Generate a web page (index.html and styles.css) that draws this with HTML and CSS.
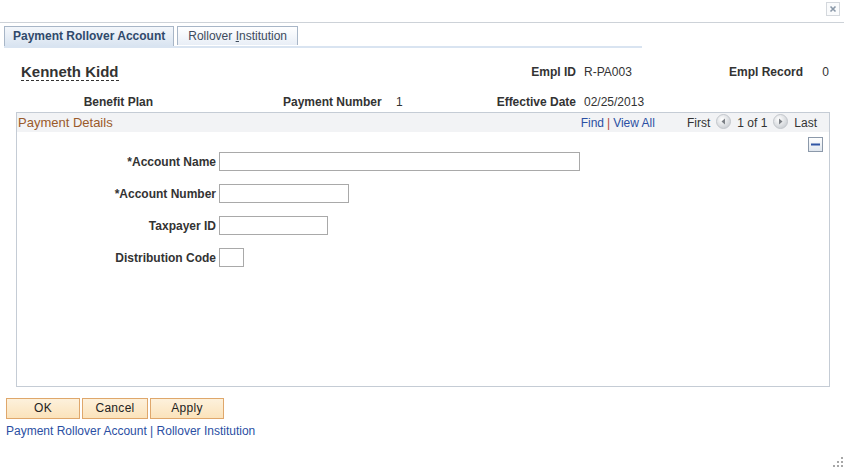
FILE: index.html
```html
<!DOCTYPE html>
<html>
<head>
<meta charset="utf-8">
<link rel="stylesheet" href="styles.css">
</head>
<body>
<div class="page">
  <div class="topbar">
    <span class="close" title="Close">
      <svg width="14" height="14" viewBox="0 0 14 14"><rect x="0.5" y="0.5" width="13" height="13" fill="#fafbfc" stroke="#d4d8dd"/><path d="M4.5 4.5 L9.5 9.5 M9.5 4.5 L4.5 9.5" stroke="#8a98a8" stroke-width="1.6"/></svg>
    </span>
  </div>
  <div class="tabs">
    <div class="tab active">Payment Rollover Account</div>
    <div class="tab">Rollover <u>I</u>nstitution</div>
  </div>
  <div class="tabline"></div>

  <div class="hdr">
    <div class="name-cell"><span class="name">Kenneth Kidd</span></div>
    <div class="lbl">Empl ID</div>
    <div class="val">R-PA003</div>
    <div class="lbl">Empl Record</div>
    <div class="val num">0</div>

    <div class="lbl">Benefit Plan</div>
    <div class="val"></div>
    <div class="lbl">Payment Number</div>
    <div class="val pn">1</div>
    <div class="lbl">Effective Date</div>
    <div class="val">02/25/2013</div>
    <div></div>
    <div></div>
  </div>

  <div class="box">
    <div class="box-head">
      <span class="box-title">Payment Details</span>
      <span class="spacer"></span>
      <span class="lnk">Find</span><span class="sep">|</span><span class="lnk">View All</span>
      <span class="nav">
        <span class="navtxt">First</span>
        <svg class="arr" width="15" height="15" viewBox="0 0 15 15"><defs><radialGradient id="g1" cx="0.4" cy="0.35" r="0.7"><stop offset="0" stop-color="#ffffff"/><stop offset="1" stop-color="#c9cdd2"/></radialGradient></defs><circle cx="7.5" cy="7.5" r="7" fill="url(#g1)" stroke="#c3c7cc"/><path d="M9 4.5 L5.5 7.5 L9 10.5 Z" fill="#7b7f85"/></svg>
        <span class="navtxt">1 of 1</span>
        <svg class="arr" width="15" height="15" viewBox="0 0 15 15"><defs><radialGradient id="g2" cx="0.4" cy="0.35" r="0.7"><stop offset="0" stop-color="#ffffff"/><stop offset="1" stop-color="#c9cdd2"/></radialGradient></defs><circle cx="7.5" cy="7.5" r="7" fill="url(#g2)" stroke="#c3c7cc"/><path d="M6 4.5 L9.5 7.5 L6 10.5 Z" fill="#7b7f85"/></svg>
        <span class="navtxt">Last</span>
      </span>
    </div>
    <div class="collapse-row">
      <span class="collapse"><svg width="15" height="15" viewBox="0 0 15 15"><defs><linearGradient id="cg" x1="0" y1="0" x2="0" y2="1"><stop offset="0" stop-color="#ffffff"/><stop offset="1" stop-color="#dfe6ee"/></linearGradient></defs><rect x="0.5" y="0.5" width="14" height="14" fill="url(#cg)" stroke="#8c99aa"/><rect x="3" y="6.5" width="9" height="2" fill="#2f55a4"/></svg></span>
    </div>
    <div class="form">
      <div class="frow"><label>*Account Name</label><span class="inp w1"></span></div>
      <div class="frow"><label>*Account Number</label><span class="inp w2"></span></div>
      <div class="frow"><label>Taxpayer ID</label><span class="inp w3"></span></div>
      <div class="frow"><label>Distribution Code</label><span class="inp w4"></span></div>
    </div>
  </div>

  <div class="buttons">
    <span class="btn b-ok">OK</span>
    <span class="btn b-cancel">Cancel</span>
    <span class="btn b-apply">Apply</span>
  </div>
  <div class="footlinks"><span class="lnk">Payment Rollover Account</span> | <span class="lnk">Rollover Institution</span></div>

  <svg class="grip" width="10" height="10" viewBox="0 0 10 10"><g fill="#a7a7a7"><rect x="8" y="0" width="2" height="2"/><rect x="4" y="4" width="2" height="2"/><rect x="8" y="4" width="2" height="2"/><rect x="0" y="8" width="2" height="2"/><rect x="4" y="8" width="2" height="2"/><rect x="8" y="8" width="2" height="2"/></g></svg>
</div>
</body>
</html>
```

FILE: styles.css
```css
html, body {
  margin: 0;
  padding: 0;
  background: #ffffff;
}
body {
  font-family: "Liberation Sans", Arial, sans-serif;
  font-size: 12px;
  color: #333333;
}
.page {
  position: relative;
  width: 844px;
  height: 468px;
  overflow: hidden;
}
.topbar {
  height: 22px;
  border-bottom: 1px solid #cdd2d8;
  box-sizing: content-box;
  display: flex;
  justify-content: flex-end;
  align-items: flex-start;
  padding-right: 4px;
}
.close {
  display: block;
  width: 14px;
  height: 14px;
  margin-top: 2px;
}
.close svg { display: block; }
.tabs {
  display: flex;
  align-items: flex-start;
  gap: 3px;
  padding-left: 4px;
  margin-top: 3px;
  height: 20px;
}
.tab {
  box-sizing: border-box;
  height: 19px;
  line-height: 18px;
  padding: 0 10px;
  border: 1px solid #a8b6c7;
  border-bottom: none;
  background: linear-gradient(#ffffff, #e8eef6);
  color: #3d4b5c;
  font-size: 12px;
  white-space: nowrap;
}
.tab.active {
  height: 20px;
  padding: 0 8px;
  font-weight: bold;
  color: #30496b;
  background: linear-gradient(#f4f7fb, #d9e4f1);
}
.tab u { text-decoration: underline; }
.tabline {
  width: 638px;
  margin-left: 4px;
  height: 2px;
  background: #d9e4f1;
}
.hdr {
  display: grid;
  grid-template-columns: 153px 130px 96px 101px 96px 104px 123px 26px;
  grid-template-rows: 30px 20px;
  row-gap: 5px;
  margin-top: 9px;
  align-items: center;
}
.name-cell {
  grid-column: 1 / 5;
  padding-left: 21px;
}
.name {
  font-size: 15px;
  font-weight: bold;
  line-height: 17px;
  display: inline-block;
  border-bottom: 1px dashed #333333;
}
.lbl {
  font-weight: bold;
  text-align: right;
  white-space: nowrap;
}
.val {
  padding-left: 8px;
  white-space: nowrap;
}
.val.num {
  text-align: right;
  padding-left: 0;
}
.val.pn { padding-left: 17px; }
.box {
  margin-left: 16px;
  width: 814px;
  height: 275px;
  box-sizing: border-box;
  border: 1px solid #c5ccd5;
}
.box-head {
  display: flex;
  align-items: center;
  height: 19px;
  background: #f2f3f5;
  padding-left: 1px;
  padding-right: 12px;
}
.box-title {
  color: #9a5a2b;
  font-size: 13px;
}
.spacer { flex: 1; }
.lnk { color: #2b4fa3; }
.sep { color: #b0463a; margin: 0 3px; }
.nav {
  display: flex;
  align-items: center;
  margin-left: 32px;
  gap: 5px;
}
.nav .navtxt { color: #333; }
.nav .arr { display: block; margin: 0 1px; position: relative; top: -1px; }
.collapse-row {
  display: flex;
  justify-content: flex-end;
  padding: 5px 6px 0 0;
  height: 15px;
}
.collapse svg { display: block; }
.form {
  display: flex;
  flex-direction: column;
  gap: 13px;
  padding-top: 0px;
}
.frow {
  display: flex;
  align-items: center;
  height: 19px;
  gap: 3px;
}
.frow label {
  width: 199px;
  text-align: right;
  font-weight: bold;
  white-space: nowrap;
}
.inp {
  display: block;
  height: 19px;
  box-sizing: border-box;
  border: 1px solid #a9a9a9;
  background: #fff;
}
.w1 { width: 361px; }
.w2 { width: 130px; }
.w3 { width: 109px; }
.w4 { width: 25px; }
.buttons {
  display: flex;
  gap: 2px;
  margin-top: 11px;
  padding-left: 6px;
}
.btn {
  display: block;
  box-sizing: border-box;
  height: 21px;
  line-height: 19px;
  text-align: center;
  border: 1px solid #dfa76b;
  background: linear-gradient(#fdf1dc, #fbe3bb);
  color: #222;
  letter-spacing: 0.3px;
}
.b-ok { width: 74px; }
.b-cancel { width: 66px; }
.b-apply { width: 74px; }
.footlinks {
  margin-top: 5px;
  padding-left: 6px;
  color: #2b4fa3;
  line-height: 14px;
}
.grip {
  position: absolute;
  right: 1px;
  bottom: 1px;
}
```
